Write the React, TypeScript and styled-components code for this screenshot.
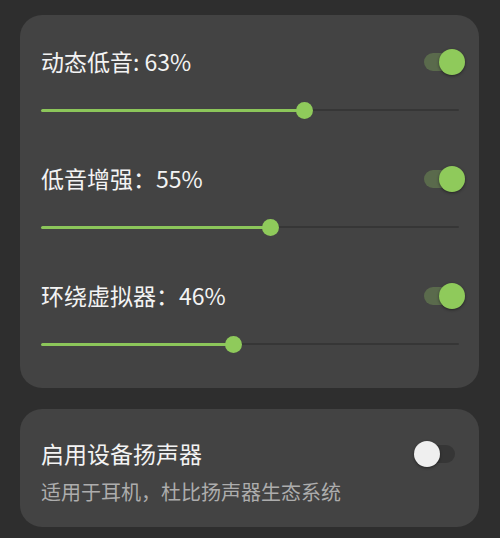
import React from "react";
import styled, { createGlobalStyle } from "styled-components";

const GlobalStyle = createGlobalStyle`
  html, body {
    margin: 0;
    padding: 0;
    background: #2e2e2e;
  }
  body {
    font-family: "Noto Sans CJK SC", sans-serif;
    -webkit-font-smoothing: antialiased;
  }
`;

const Page = styled.div`
  width: 500px;
  height: 538px;
  box-sizing: border-box;
  padding: 15px 21px 0 20px;
  display: flex;
  flex-direction: column;
  gap: 21px;
  background: #2e2e2e;
`;

const Card = styled.div<{ $pt: number; $pb: number; $pr: number }>`
  background: #434343;
  border-radius: 22px;
  padding: ${(p) => p.$pt}px ${(p) => p.$pr}px ${(p) => p.$pb}px 21px;
  display: flex;
  flex-direction: column;
`;

const Effect = styled.div`
  display: flex;
  flex-direction: column;
  gap: 24px;
  & + & {
    margin-top: 45px;
  }
`;

const Header = styled.div`
  height: 30px;
  display: flex;
  align-items: center;
  justify-content: space-between;
`;

const Title = styled.div`
  font-size: 23px;
  line-height: 30px;
  padding-bottom: 3px;
  font-weight: 400;
  color: #f3f3f3;
  font-family: "Noto Sans CJK SC", sans-serif;
`;

const Subtitle = styled.div`
  margin-top: 10px;
  font-size: 20px;
  line-height: 26px;
  color: #adadad;
  font-family: "Noto Sans CJK SC", sans-serif;
`;

const SwitchBox = styled.div`
  position: relative;
  width: 41px;
  height: 26px;
  flex-shrink: 0;
`;

const SwitchTrack = styled.div<{ $on: boolean }>`
  position: absolute;
  left: 0;
  right: 0;
  top: 4px;
  height: 18px;
  border-radius: 9px;
  background: ${(p) => (p.$on ? "#5a6a4c" : "#363636")};
`;

const SwitchThumb = styled.div<{ $on: boolean }>`
  position: absolute;
  top: 0;
  ${(p) => (p.$on ? "right: 0;" : "left: 0;")}
  width: 26px;
  height: 26px;
  border-radius: 50%;
  background: ${(p) => (p.$on ? "#8fca5b" : "#efefef")};
  box-shadow: 0 1px 3px rgba(0, 0, 0, 0.45);
`;

const SliderBox = styled.div`
  position: relative;
  height: 18px;
  margin-right: 6px;
`;

const Rail = styled.div`
  position: absolute;
  left: 0;
  right: 0;
  top: 8px;
  height: 2px;
  background: #363636;
  border-radius: 1px;
`;

const Fill = styled.div`
  position: absolute;
  left: 0;
  top: 7.5px;
  height: 3px;
  background: #8cc65a;
  border-radius: 1.5px;
`;

const Knob = styled.div`
  position: absolute;
  top: 0.5px;
  width: 17px;
  height: 17px;
  margin-left: -8.5px;
  border-radius: 50%;
  background: #8fca5b;
`;

const Switch = ({ on }: { on: boolean }) => (
  <SwitchBox>
    <SwitchTrack $on={on} />
    <SwitchThumb $on={on} />
  </SwitchBox>
);

const Slider = ({ value }: { value: number }) => (
  <SliderBox>
    <Rail />
    <Fill style={{ width: `${value}%` }} />
    <Knob style={{ left: `${value}%` }} />
  </SliderBox>
);

const effects = [
  { label: "动态低音: 63%", value: 63 },
  { label: "低音增强：55%", value: 55 },
  { label: "环绕虚拟器：46%", value: 46 },
];

export default function App() {
  return (
    <>
      <GlobalStyle />
      <Page>
        <Card $pt={32} $pb={35} $pr={14}>
          {effects.map((e) => (
            <Effect key={e.label}>
              <Header>
                <Title>{e.label}</Title>
                <Switch on />
              </Header>
              <Slider value={e.value} />
            </Effect>
          ))}
        </Card>
        <Card $pt={30} $pb={22} $pr={24}>
          <Header>
            <Title>启用设备扬声器</Title>
            <Switch on={false} />
          </Header>
          <Subtitle>适用于耳机，杜比扬声器生态系统</Subtitle>
        </Card>
      </Page>
    </>
  );
}
